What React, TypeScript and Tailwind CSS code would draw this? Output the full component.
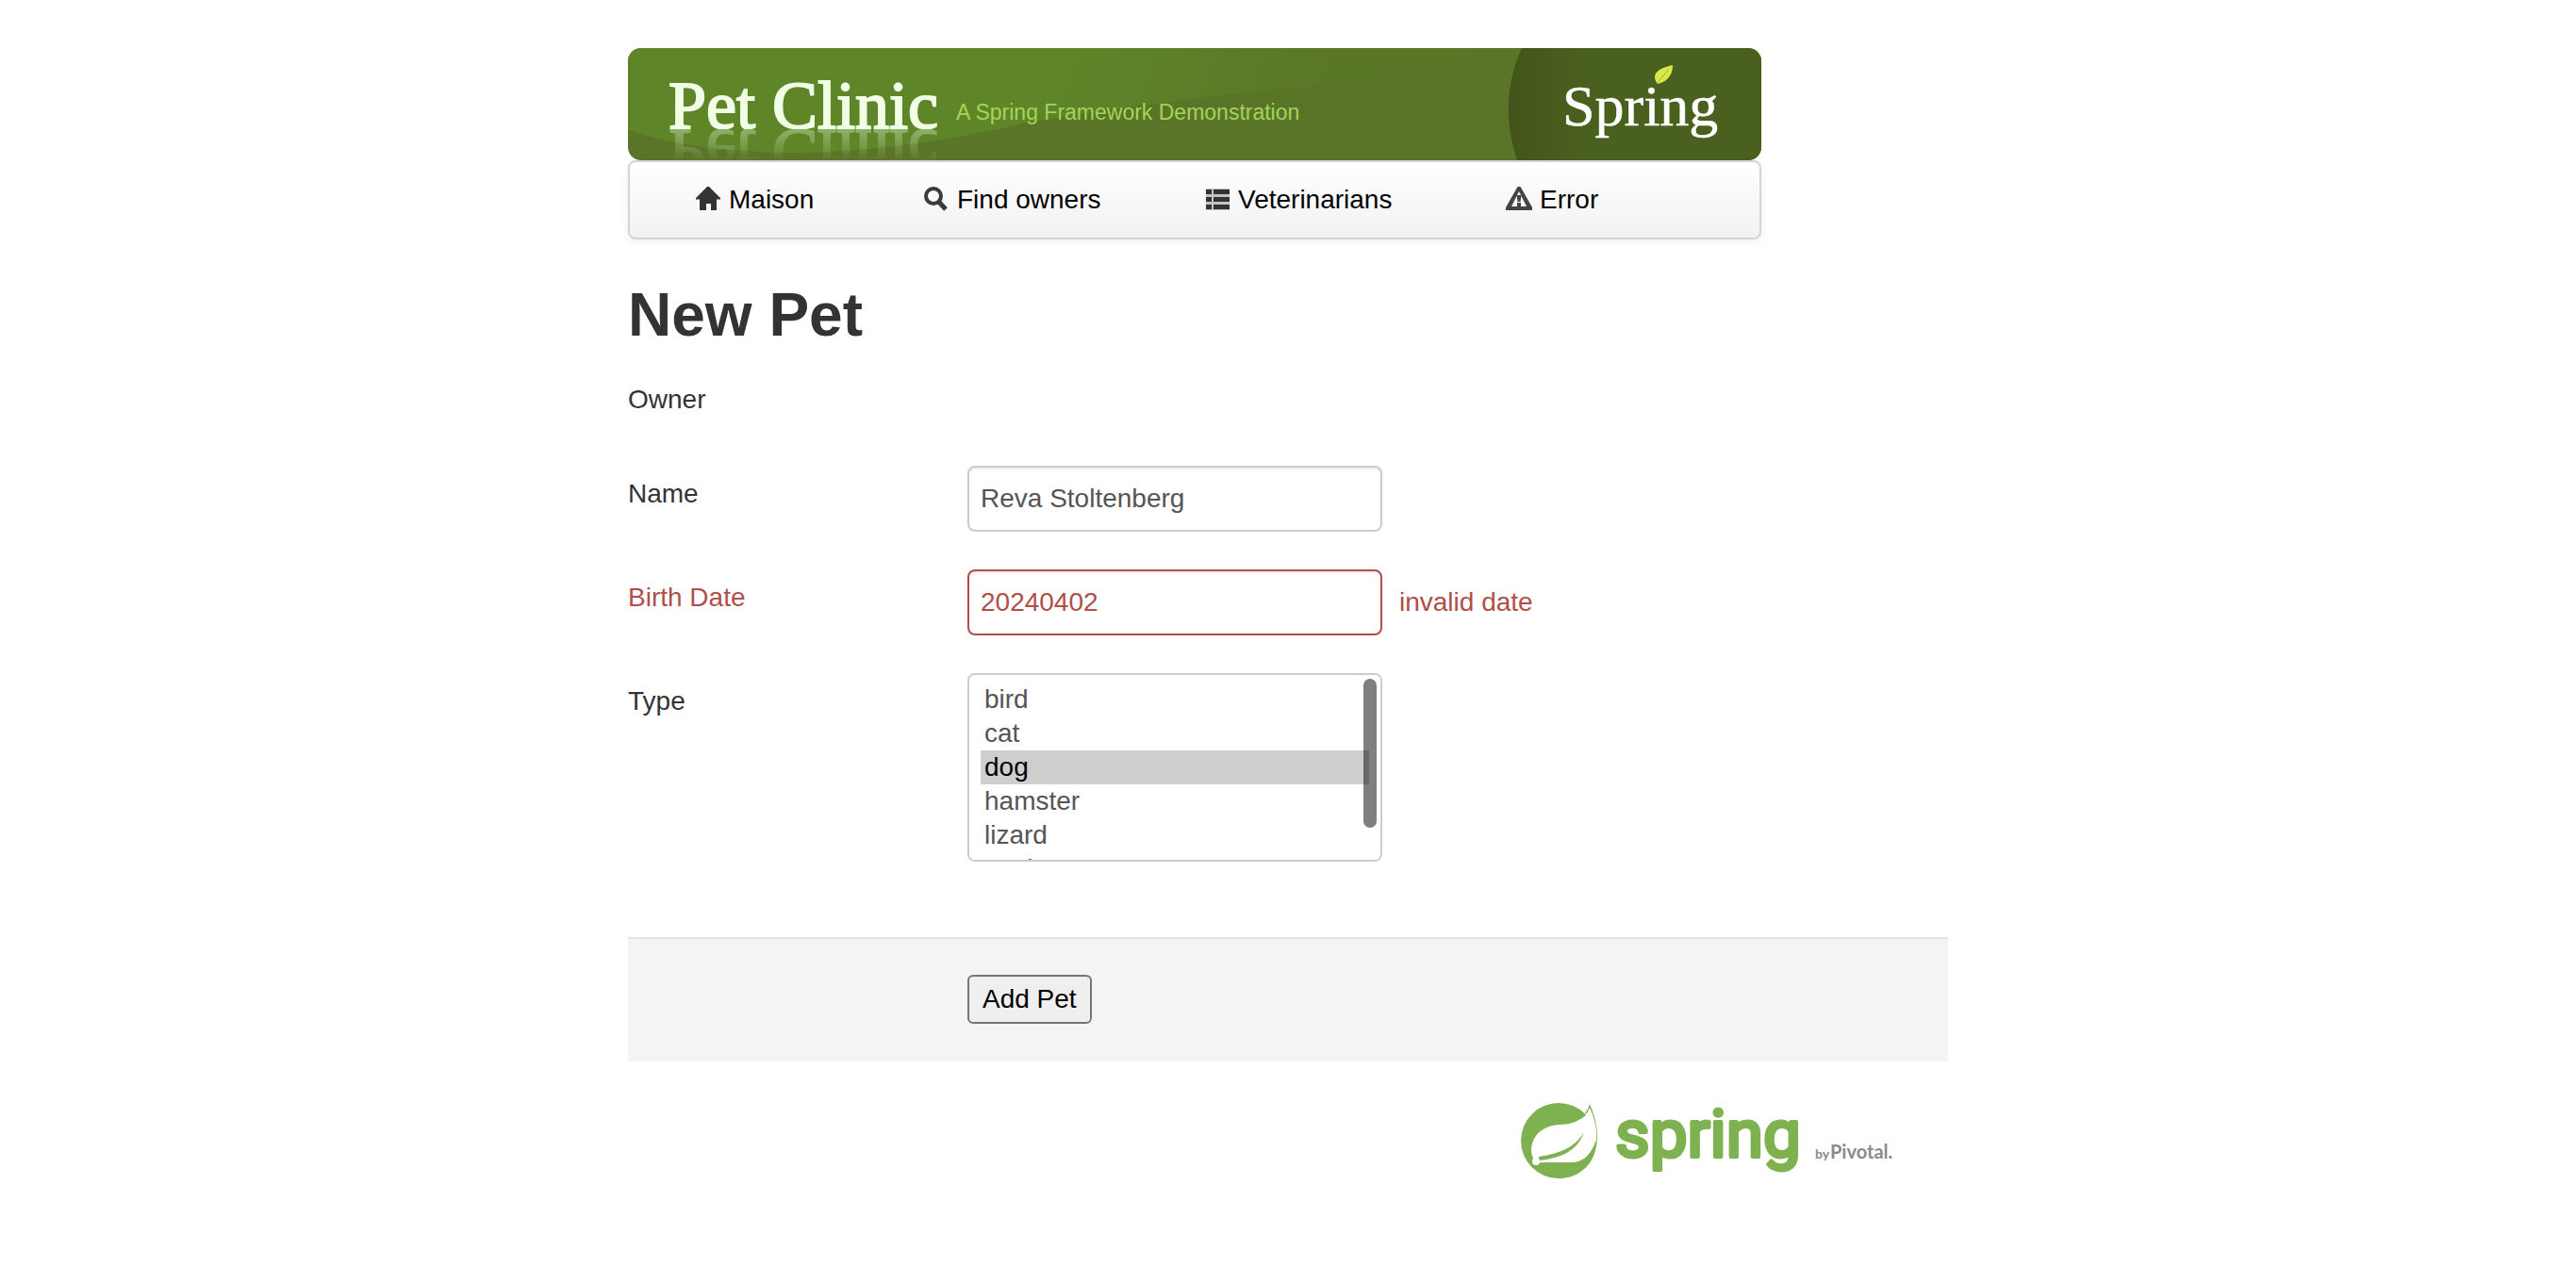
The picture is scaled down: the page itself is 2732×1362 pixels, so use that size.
import React from "react";

const icons = {
  home: (
    <svg viewBox="0 2 28 28" className="size-7" fill="#333" aria-hidden="true">
      <path d="M14 1 27 14V15.500H23V27H17V20H12V27H5V15.500H1V14Z" />
    </svg>
  ),
  search: (
    <svg viewBox="0 2 28 28" className="size-7" fill="none" stroke="#3a3a3a" aria-hidden="true">
      <circle cx="11" cy="12" r="8" strokeWidth="4" />
      <path d="M17 18.500 24 26" strokeWidth="5" />
    </svg>
  ),
  list: (
    <svg viewBox="0 2 28 28" className="size-7" aria-hidden="true">
      <path fill="#c4c4c4" d="M2 4h25v23H2z" />
      <path fill="#333" d="M2 5h6v5H2zM10 5h17v5H10zM2 13h6v5H2zM10 13h17v5H10zM2 21h6v5H2zM10 21h17v5H10z" />
    </svg>
  ),
  warning: (
    <svg viewBox="0 2 28 28" className="size-7" aria-hidden="true">
      <path fill="#444" fillRule="evenodd" d="M12.500 2H15.500L28 24V27H0V24ZM14 7 6 23H22Z" />
      <path fill="#444" d="M11.500 11h5l-1 7h-3zM12 19h4v4h-4z" />
    </svg>
  ),
};

const navItems = [
  { label: "Maison", icon: icons.home },
  { label: "Find owners", icon: icons.search },
  { label: "Veterinarians", icon: icons.list },
  { label: "Error", icon: icons.warning },
];

const petTypes = ["bird", "cat", "dog", "hamster", "lizard", "snake"];

const fieldBox =
  "w-[440px] rounded-lg border-2 bg-white text-[28px] outline-none";

function Banner() {
  return (
    <header className="relative flex h-[119px] items-start overflow-hidden rounded-[14px] bg-[#5a7527]">
      <svg viewBox="0 0 1202 120" preserveAspectRatio="none" className="absolute inset-0 size-full" aria-hidden="true">
        <defs>
          <linearGradient id="hill" gradientUnits="userSpaceOnUse" x1="440" y1="0" x2="720" y2="100">
            <stop offset="0" stopColor="#5e8628" />
            <stop offset="1" stopColor="#5a7727" />
          </linearGradient>
          <linearGradient id="side" gradientUnits="userSpaceOnUse" x1="934" y1="0" x2="1010" y2="0">
            <stop offset="0" stopColor="#42541b" />
            <stop offset="1" stopColor="#4a601f" />
          </linearGradient>
        </defs>
        <path fill="url(#hill)" d="M0 0H900C892 12 875 22 850 26C740 38 560 56 422 80C330 102 240 112 170 112C90 110 40 102 0 87Z" />
        <path fill="url(#side)" d="M948 0C930 40 930 80 943 120H1202V0Z" />
      </svg>
      <svg
        viewBox="0 0 300 86"
        className="relative ml-10 h-[86px] w-[300px] [-webkit-box-reflect:below_0px_linear-gradient(transparent_60%,rgba(255,255,255,0.35))]"
        role="img"
        aria-label="Pet Clinic"
      >
        <text x="3" y="85" fontFamily="Liberation Serif, serif" fontSize="72" fill="#f1ffe6" stroke="#f1ffe6" strokeWidth="2">
          Pet Clinic
        </text>
      </svg>
      <p className="relative ml-2 mt-14 text-[23px] leading-6 text-[#a5d35a]">
        A Spring Framework Demonstration
      </p>
      <svg viewBox="0 0 180 119" className="relative ml-auto mr-8 h-[119px] w-[180px]" role="img" aria-label="Spring">
        <text x="1" y="82" fontFamily="Liberation Serif, serif" fontSize="62" fill="#fff" stroke="#fff" strokeWidth="0.5">
          Spring
        </text>
        <path fill="#d9e84a" d="M118 18C118 27 114 35 102 38C95 29 100 22 118 18Z" />
        <path fill="none" stroke="#9fb32f" d="M114 22 101 38" />
      </svg>
    </header>
  );
}

function SpringLogo() {
  return (
    <svg viewBox="0 0 400 90" className="h-[90px] w-[400px]" role="img" aria-label="spring by Pivotal">
      <circle cx="41" cy="44" r="40" fill="#7eb14f" />
      <path fill="#fff" d="M70 17C72 14 73 12 74 9L86 4V60L75 64C68 68 62 69 54 68L17 67C11 60 11 52 14 44C19 33 29 28 41 27C55 27 64 22 70 17Z" />
      <path fill="#7eb14f" d="M71 15 74 9C82 27 83 40 79 52C72 68 60 75 41 84C62 83 76 71 80 54C84 40 82 24 74 5C73 9 71 12 69 15Z" />
      <path fill="#7eb14f" d="M80 45C75 60 66 67 54 67H25V70L20 74C32 86 52 86 64 77C74 69 80 58 81 45Z" />
      <path fill="#7eb14f" d="M68 35C58 51 44 57 20 61V65C46 62 61 54 68 35Z" />
      <circle cx="17" cy="66" r="4" fill="#fff" />
      <text x="101" y="61" fontFamily="Roboto, sans-serif" fontWeight="400" fontSize="71" fill="#7eb14f" stroke="#7eb14f" strokeWidth="4" strokeLinejoin="round">
        spring
      </text>
      <text x="313" y="63" fontFamily="Lato, sans-serif" fontWeight="700" fontSize="14" fill="#8a8a8e">
        by
      </text>
      <text x="329" y="63" fontFamily="Lato, sans-serif" fontWeight="700" fontSize="20" fill="#8a8a8e">
        Pivotal.
      </text>
    </svg>
  );
}

type RowProps = {
  label: string;
  htmlFor: string;
  error?: string;
  children: React.ReactNode;
};

function Row({ label, htmlFor, error, children }: RowProps) {
  return (
    <div className={error ? "flex text-[#ae4f4a]" : "flex text-[#333]"}>
      <label htmlFor={htmlFor} className="w-[360px] pt-2.5 leading-10">
        {label}
      </label>
      {children}
      {error && (
        <span id={`${htmlFor}-error`} className="ml-[18px] self-center leading-10">
          {error}
        </span>
      )}
    </div>
  );
}

export default function App() {
  return (
    <div className="min-h-screen bg-white font-['Liberation_Sans',Arial,sans-serif] text-[28px] leading-10 text-[#333]">
      <div className="mx-auto max-w-[1400px] pt-[51px]">
        <div className="max-w-[1202px]">
          <Banner />
          <nav className="rounded-lg border-2 border-[#d4d4d4] bg-linear-to-b from-white to-[#f2f2f2] pl-[69px] shadow-[0_2px_8px_rgba(0,0,0,0.07)]">
            <ul className="grid h-20 grid-cols-[242px_298px_320px_auto] items-center">
              {navItems.map((item) => (
                <li key={item.label}>
                  <a href="#" className="flex items-center gap-2 text-black">
                    {item.icon}
                    {item.label}
                  </a>
                </li>
              ))}
            </ul>
          </nav>
        </div>

        <main>
          <h1 className="mt-10 text-[64px] font-bold leading-20">New Pet</h1>
          <form onSubmit={(e) => e.preventDefault()}>
            <div className="mt-[30px] mb-[50px]">Owner</div>
            <div className="flex flex-col gap-10">
              <Row label="Name" htmlFor="name">
                <input
                  id="name"
                  type="text"
                  defaultValue="Reva Stoltenberg"
                  className={`${fieldBox} h-[70px] border-[#ccc] px-3 text-[#555] shadow-[inset_0_2px_2px_rgba(0,0,0,0.075)]`}
                />
              </Row>
              <Row label="Birth Date" htmlFor="birthDate" error="invalid date">
                <input
                  id="birthDate"
                  type="text"
                  defaultValue="20240402"
                  aria-invalid="true"
                  aria-describedby="birthDate-error"
                  className={`${fieldBox} h-[70px] border-[#ae4f4a] px-3 text-[#ae4f4a] shadow-[inset_0_2px_2px_rgba(0,0,0,0.075)]`}
                />
              </Row>
              <Row label="Type" htmlFor="type">
                <div className="relative">
                  <select
                    id="type"
                    size={5}
                    defaultValue="dog"
                    className={`${fieldBox} block h-[200px] overflow-y-auto border-[#ccc] px-3 py-2 text-[#555] [scrollbar-width:none]`}
                  >
                    {petTypes.map((type) => (
                      <option
                        key={type}
                        className="h-9 px-1 pt-0.5 pb-0 leading-[34px] checked:bg-[#cecece] checked:bg-[linear-gradient(#cecece,#cecece)] checked:text-black"
                      >
                        {type}
                      </option>
                    ))}
                  </select>
                  <span className="pointer-events-none absolute right-1.5 top-1.5 h-[158px] w-3.5 rounded-full bg-black/50" />
                </div>
              </Row>
            </div>
            <div className="mt-20 border-t-2 border-[#e5e5e5] bg-[#f4f4f4] pt-[38px] pb-10 pl-[360px]">
              <button
                type="submit"
                className="block h-[52px] rounded-md border-2 border-[#767676] bg-[#efefef] px-3.5 leading-10 text-black"
              >
                Add Pet
              </button>
            </div>
          </form>
        </main>

        <footer className="mt-10 flex justify-end pr-[54px]">
          <SpringLogo />
        </footer>
      </div>
    </div>
  );
}
